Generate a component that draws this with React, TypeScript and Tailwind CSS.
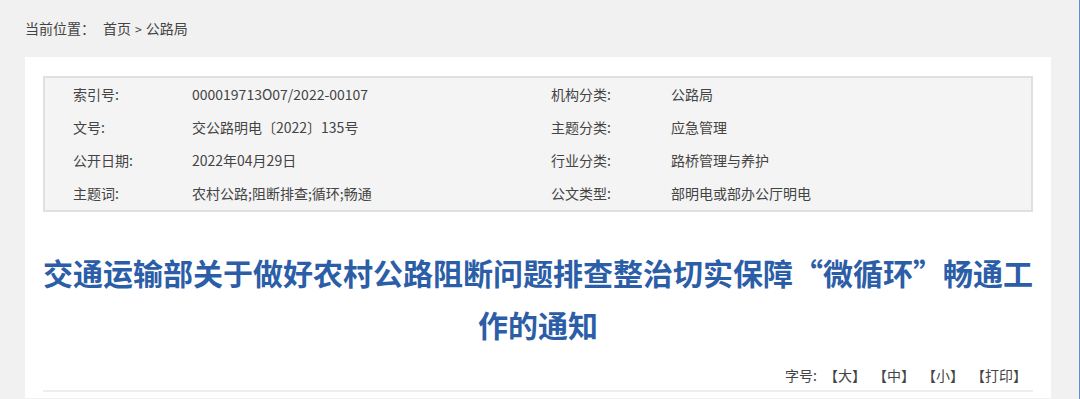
import React from 'react';

const infoRows: [string, string, string, string][] = [
  ['索引号:', '000019713O07/2022-00107', '机构分类:', '公路局'],
  ['文号:', '交公路明电〔2022〕135号', '主题分类:', '应急管理'],
  ['公开日期:', '2022年04月29日', '行业分类:', '路桥管理与养护'],
  ['主题词:', '农村公路;阻断排查;循环;畅通', '公文类型:', '部明电或部办公厅明电'],
];

const App: React.FC = () => {
  return (
    <div
      className="min-h-[399px] bg-[#f1f1f1] pl-[25px] pr-[28px] border-r border-[#5b8fd6] text-[#444]"
      style={{ fontFamily: '"Microsoft YaHei", "Noto Sans CJK SC", "Noto Sans", sans-serif' }}
    >
      {/* Breadcrumb */}
      <div className="h-[57px] flex items-center text-[14px] text-[#444]">
        <span>当前位置：</span>
        <span className="ml-[8px]">首页</span>
        <span className="mx-[4px] text-[12px]">&gt;</span>
        <span>公路局</span>
      </div>

      <div className="bg-white px-[18px] pt-[19px] pb-[6px]">
        {/* Info box */}
        <div className="border-2 border-[#e0e0e0] bg-[#f4f4f4]">
          {infoRows.map(([l1, v1, l2, v2]) => (
            <div key={l1} className="h-[33px] flex items-center text-[14px] text-[#444]">
              <div className="w-[506px] flex pl-[28px]">
                <span className="w-[119px] shrink-0">{l1}</span>
                <span>{v1}</span>
              </div>
              <div className="flex">
                <span className="w-[120px] shrink-0">{l2}</span>
                <span>{v2}</span>
              </div>
            </div>
          ))}
        </div>

        {/* Title */}
        <h1 className="mt-[34px] -mx-[2px] text-center text-[30px] leading-[52px] font-bold text-[#2c5ea8]">
          交通运输部关于做好农村公路阻断问题排查整治切实保障“微循环”畅通工作的通知
        </h1>

        {/* Font size controls */}
        <div className="mt-[15px] pb-[5px] flex justify-end gap-[7px] pr-[6px] text-[14px] leading-[20px] text-[#444] border-b-2 border-[#eeeeee]">
          <span>字号:</span>
          <span>【大】</span>
          <span>【中】</span>
          <span>【小】</span>
          <span>【打印】</span>
        </div>
      </div>
    </div>
  );
};

export default App;
